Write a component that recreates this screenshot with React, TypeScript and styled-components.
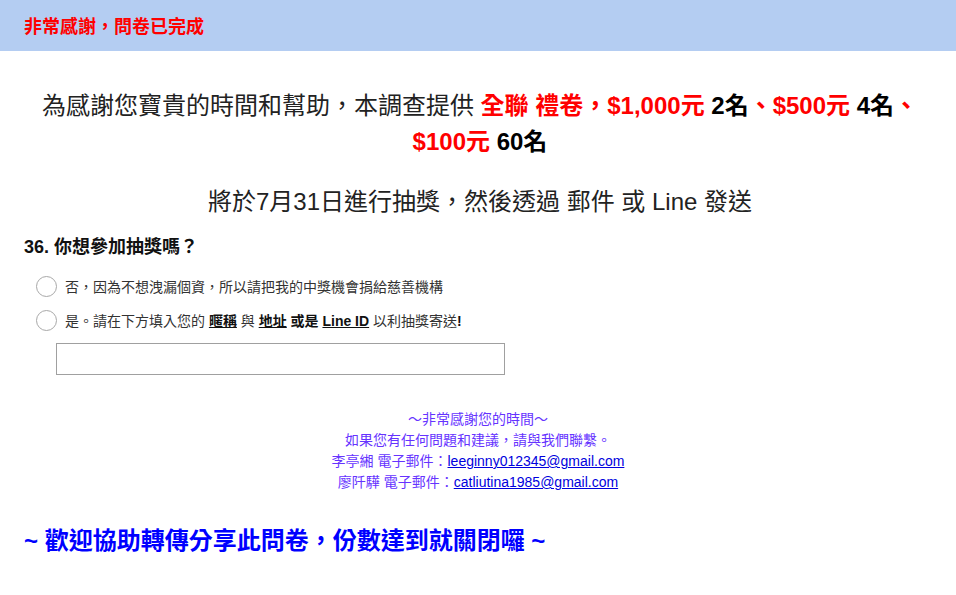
import React from "react";
import styled, { createGlobalStyle } from "styled-components";

const GlobalStyle = createGlobalStyle`
  html, body { margin: 0; padding: 0; background: #ffffff; }
  body {
    font-family: "Liberation Sans", "Noto Sans CJK TC", sans-serif;
    color: #222;
  }
  * { box-sizing: border-box; }
`;

const Header = styled.header`
  height: 51px;
  background: #b4cdf2;
  display: flex;
  align-items: center;
  padding: 2px 24px 0;
`;

const HeaderTitle = styled.h1`
  margin: 0;
  font-size: 18px;
  font-weight: 700;
  color: #ff0000;
  line-height: 24px;
`;

const Main = styled.main`
  display: flex;
  flex-direction: column;
  padding: 0 24px;
`;

const Lead = styled.p<{ $top: number }>`
  margin: ${(p) => p.$top}px 0 0;
  padding-left: 4px;
  font-size: 24px;
  line-height: 36px;
  text-align: center;
  color: #222;
`;

const Hot = styled.strong<{ $red?: boolean }>`
  font-weight: 700;
  color: ${(p) => (p.$red ? "#ff0000" : "#000")};
`;

const Question = styled.h2`
  margin: 15px 0 0;
  font-size: 18px;
  font-weight: 700;
  line-height: 24px;
  color: #111;
`;

const Options = styled.div`
  display: flex;
  flex-direction: column;
  margin-top: 10px;
  padding-left: 12px;
`;

const Option = styled.label`
  display: flex;
  align-items: center;
  gap: 8px;
  height: 34px;
  font-size: 14px;
  color: #333;
  cursor: pointer;
`;

const Radio = styled.input.attrs({ type: "radio" })`
  appearance: none;
  -webkit-appearance: none;
  margin: 0;
  width: 21px;
  height: 21px;
  border-radius: 50%;
  border: 1.5px solid #a8a8a8;
  background: #fff;
  flex: none;
`;

const Em = styled.span<{ $u?: boolean }>`
  font-weight: 700;
  color: #111;
  text-decoration: ${(p) => (p.$u ? "underline" : "none")};
`;

const TextField = styled.input.attrs({ type: "text" })`
  margin: 6px 0 0 32px;
  width: 449px;
  height: 32px;
  border: 1px solid #a0a0a0;
  border-radius: 0;
  padding: 0 6px;
  font-size: 14px;
  outline: none;
`;

const Contact = styled.div`
  margin-top: 34px;
  display: flex;
  flex-direction: column;
  align-items: center;
  font-size: 14px;
  line-height: 21px;
  color: #6633ff;
`;

const Mail = styled.a`
  color: #0000dd;
  text-decoration: underline;
`;

const Footer = styled.p`
  margin: 32px 0 0;
  font-size: 24px;
  line-height: 32px;
  font-weight: 700;
  color: #0000ff;
`;

export default function App() {
  return (
    <>
      <GlobalStyle />
      <Header>
        <HeaderTitle>非常感謝，問卷已完成</HeaderTitle>
      </Header>
      <Main>
        <Lead $top={37}>
          為感謝您寶貴的時間和幫助，本調查提供 <Hot $red>全聯 禮卷</Hot>
          <Hot $red>，</Hot>
          <Hot $red>$1,000元</Hot> <Hot>2名</Hot>
          <Hot $red>、</Hot>
          <Hot $red>$500元</Hot> <Hot>4名</Hot>
          <Hot $red>、</Hot>
          <Hot $red>$100元</Hot> <Hot>60名</Hot>
        </Lead>
        <Lead $top={24}>將於7月31日進行抽獎，然後透過 郵件 或 Line 發送</Lead>
        <Question>36. 你想參加抽獎嗎？</Question>
        <Options>
          <Option>
            <Radio name="lottery" />
            否，因為不想洩漏個資，所以請把我的中獎機會捐給慈善機構
          </Option>
          <Option>
            <Radio name="lottery" />
            <span>
              是。請在下方填入您的 <Em $u>暱稱</Em> 與 <Em $u>地址</Em> <Em>或是</Em>{" "}
              <Em $u>Line ID</Em> 以利抽獎寄送<Em>!</Em>
            </span>
          </Option>
        </Options>
        <TextField />
        <Contact>
          <span>～非常感謝您的時間～</span>
          <span>如果您有任何問題和建議，請與我們聯繫。</span>
          <span>
            李亭緗 電子郵件：<Mail href="#">leeginny012345@gmail.com</Mail>
          </span>
          <span>
            廖阡驊 電子郵件：<Mail href="#">catliutina1985@gmail.com</Mail>
          </span>
        </Contact>
        <Footer>~ 歡迎協助轉傳分享此問卷，份數達到就關閉囉 ~</Footer>
      </Main>
    </>
  );
}
